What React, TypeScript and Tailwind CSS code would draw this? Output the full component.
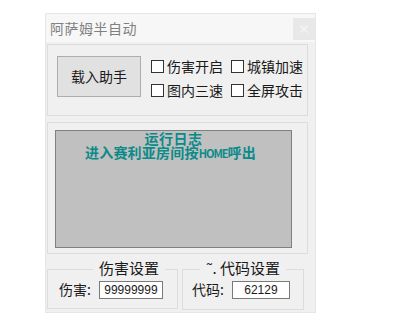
import React from "react";

const cjk = { fontFamily: '"Noto Sans CJK SC", "Noto Sans", sans-serif' };

function CheckItem({ label }: { label: string }) {
    return (
        <label className="flex items-center gap-[3px] text-[14px] text-[#1a1a1a] leading-none">
            <span className="w-[13px] h-[13px] border border-[#333] bg-white inline-block"></span>
            <span>{label}</span>
        </label>
    );
}

function Group({ title, className, legendClass, children }: { title: string; className?: string; legendClass: string; children: React.ReactNode }) {
    return (
        <div className={"relative border border-[#dcdcdc] " + (className || "")}>
            <span className={"absolute -top-[12px] px-[6px] bg-[#f0f0f0] text-[15px] leading-[20px] text-[#1a1a1a] whitespace-nowrap " + legendClass}>
                {title}
            </span>
            {children}
        </div>
    );
}

export default function App() {
    return (
        <div className="w-[420px] h-[320px] bg-white pl-[45px] pt-[13px]" style={cjk}>
            <div className="w-[271px] h-[300px] bg-[#f0f0f0] border border-[#e6e6e6] flex flex-col">
                {/* Title bar */}
                <div className="h-[28px] bg-[#f7f7f7] flex items-center justify-between pl-[4px]">
                    <span className="text-[14px] text-[#808080] tracking-[0.5px]">阿萨姆半自动</span>
                    <div className="w-[22px] h-[22px] bg-[#e8e8e8] flex items-center justify-center text-[#fafafa] text-[12px] mt-[2px]">×</div>
                </div>

                <div className="pl-[1px] pr-[7px] pt-[2px] flex flex-col">
                    {/* Options */}
                    <div className="h-[72px] border border-[#dcdcdc] flex items-start pl-[9px] pt-[11px] gap-[10px]">
                        <button className="w-[84px] h-[41px] bg-[#e1e1e1] border border-[#adadad] text-[14px] text-[#1a1a1a]">
                            载入助手
                        </button>
                        <div className="grid grid-cols-2 gap-x-[8px] gap-y-[10px] pt-[3px]">
                            <CheckItem label="伤害开启" />
                            <CheckItem label="城镇加速" />
                            <CheckItem label="图内三速" />
                            <CheckItem label="全屏攻击" />
                        </div>
                    </div>

                    {/* Log */}
                    <div className="mt-[6px] h-[132px] border border-[#dcdcdc] pl-[7px] pr-[15px] pt-[7px]">
                        <div className="h-[118px] bg-[#c0c0c0] border border-[#808080] flex flex-col items-center text-[#0b8a8a] font-bold text-[14px] leading-[14px]">
                            <span className="tracking-[0.5px]">运行日志</span>
                            <span className="pr-[6px] tracking-[0.2px]">
                                进入赛利亚房间按<span className="text-[11px] tracking-[-1px]">HOME</span>呼出
                            </span>
                        </div>
                    </div>

                    {/* Settings */}
                    <div className="mt-[15px] flex gap-[4px]">
                        <Group title="伤害设置" className="w-[131px] h-[40px]" legendClass="left-[45px]">
                            <div className="flex items-center pl-[11px] pt-[9px] gap-[8px]">
                                <span className="text-[14px] text-[#1a1a1a]">伤害:</span>
                                <div className="w-[64px] h-[18px] bg-white border border-[#7a7a7a] flex items-center justify-center text-[12px] text-[#1a1a1a]" style={{ fontFamily: '"Liberation Sans", sans-serif' }}>
                                    99999999
                                </div>
                            </div>
                        </Group>
                        <Group title="˜. 代码设置" className="w-[122px] h-[41px]" legendClass="left-1/2 -translate-x-1/2">
                            <div className="flex items-center pl-[9px] pt-[9px] gap-[8px]">
                                <span className="text-[14px] text-[#1a1a1a]">代码:</span>
                                <div className="w-[58px] h-[18px] bg-white border border-[#7a7a7a] flex items-center justify-center text-[12px] text-[#1a1a1a]" style={{ fontFamily: '"Liberation Sans", sans-serif' }}>
                                    62129
                                </div>
                            </div>
                        </Group>
                    </div>
                </div>
            </div>
        </div>
    );
}
